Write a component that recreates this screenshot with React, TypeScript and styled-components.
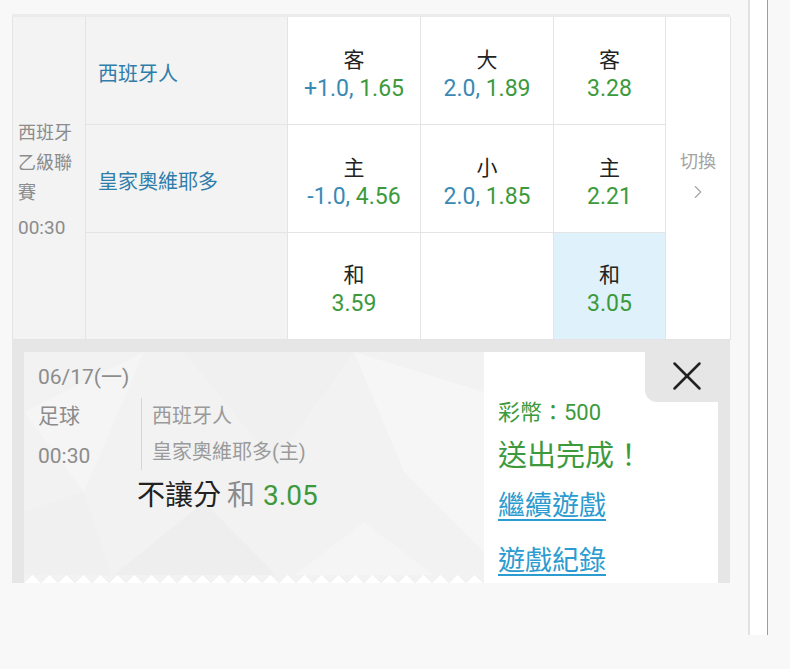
import React from 'react';
import styled, { createGlobalStyle } from 'styled-components';
import { ChevronRight, X } from 'lucide-react';

const GlobalStyle = createGlobalStyle`
  html, body {
    margin: 0;
    padding: 0;
    background: #f8f8f8;
  }
  body {
    font-family: Roboto, "Noto Sans CJK TC", "Noto Sans", sans-serif;
  }
  * { box-sizing: border-box; }
`;

const Page = styled.div`
  display: flex;
  height: 669px;
  overflow: hidden;
`;

const Main = styled.div`
  margin: 14px 0 0 12px;
  width: 718px;
  border-top: 3px solid #ebebeb;
`;

//----- odds board
const Board = styled.div`
  display: grid;
  grid-template-columns: 73px 202px 133px 133px 112px 65px;
  grid-template-rows: 108px 108px 107px;
  background: #fff;
  border-left: 1px solid #e4e4e4;
`;

const Cell = styled.div`
  border-right: 1px solid #e4e4e4;
  border-bottom: 1px solid #e4e4e4;
`;

const League = styled(Cell)`
  grid-row: span 3;
  background: #f3f3f3;
  padding: 4px 0 0 5px;
  display: flex;
  flex-direction: column;
  justify-content: center;
  color: #8c8c8c;
  font-size: 18px;
  line-height: 30px;
`;

const LeagueTime = styled.div`
  margin-top: 5px;
  font-size: 19px;
`;

const Team = styled(Cell)`
  background: #f3f3f3;
  display: flex;
  align-items: center;
  padding: 3px 0 0 12px;
  color: #2f7dab;
  font-size: 20px;
`;

const Odd = styled(Cell)<{ $picked?: boolean }>`
  background: ${(p) => (p.$picked ? '#dff1fb' : '#fff')};
  display: flex;
  flex-direction: column;
  align-items: center;
  justify-content: center;
  padding-top: 8px;
`;

const OddLabel = styled.div`
  color: #222;
  font-size: 21px;
  line-height: 28px;
`;

const OddValue = styled.div`
  font-size: 23px;
  line-height: 30px;
  white-space: nowrap;
`;

const Line = styled.span`
  color: #3a89b4;
`;

const Price = styled.span`
  color: #3c9a3c;
`;

const Switch = styled(Cell)`
  grid-row: span 3;
  background: #fff;
  display: flex;
  flex-direction: column;
  align-items: center;
  justify-content: center;
  gap: 6px;
  color: #a3a3a3;
  font-size: 18px;
  line-height: 26px;
  padding-bottom: 4px;
`;

//----- bet slip
const Slip = styled.div`
  background: #e6e6e6;
  padding: 12px 12px 0;
`;

const Ticket = styled.div`
  position: relative;
  display: flex;
  height: 231px;
  overflow: hidden;
`;

const Stub = styled.div`
  position: relative;
  width: 460px;
  background: #f2f2f2;
  padding: 11px 0 0 14px;
  overflow: hidden;

  &::after {
    content: '';
    position: absolute;
    left: 0;
    right: 0;
    bottom: 0;
    height: 8px;
    background:
      linear-gradient(to bottom right, #f2f2f2 50%, transparent 50%) 0 100% / 17px 16px,
      linear-gradient(to bottom left, #f2f2f2 50%, transparent 50%) 0 100% / 17px 16px,
      #fff;
  }
`;

const Pattern = styled.svg`
  position: absolute;
  inset: 0;
  pointer-events: none;
`;

const StubBody = styled.div`
  position: relative;
  color: #8c8c8c;
`;

const DateText = styled.div`
  font-size: 21px;
  line-height: 28px;
`;

const Info = styled.div`
  display: flex;
  margin-top: 5px;
`;

const Meta = styled.div`
  width: 103px;
  font-size: 21px;
  line-height: 40px;
`;

const Teams = styled.div`
  margin-top: 2px;
  height: 72px;
  border-left: 1px solid #d6d6d6;
  padding-left: 10px;
  color: #9a9a9a;
  font-size: 20px;
  line-height: 36px;
`;

const Pick = styled.div`
  margin: 3px 0 0 99px;
  font-size: 28px;
  line-height: 34px;
  color: #222;
`;

const PickSide = styled.span`
  color: #8c8c8c;
  margin: 0 8px 0 6px;
`;

const Receipt = styled.div`
  flex: 1;
  background: #fff;
  padding: 46px 0 0 14px;
  display: flex;
  flex-direction: column;
  align-items: flex-start;
`;

const Coins = styled.div`
  color: #3c9a3c;
  font-size: 22px;
  line-height: 30px;
`;

const Done = styled.div`
  margin-top: 4px;
  color: #3c9a3c;
  font-size: 29px;
  line-height: 48px;
`;

const Action = styled.a`
  display: block;
  margin-top: ${(p: { $gap: number }) => p.$gap}px;
  color: #2c9bd0;
  font-size: 27px;
  line-height: 50px;
  text-decoration: underline;
  text-underline-offset: 4px;
  cursor: pointer;
`;

const Close = styled.button`
  position: absolute;
  top: 0;
  right: 0;
  width: 73px;
  height: 50px;
  border: 0;
  padding: 0 0 2px 10px;
  background: #e6e6e6;
  border-bottom-left-radius: 12px;
  display: flex;
  align-items: center;
  justify-content: center;
  color: #222;
`;

//----- right scroll rail
const Rail = styled.div`
  margin-left: 18px;
  width: 20px;
  height: 635px;
  background: #fff;
  border-left: 2px solid #e2e2e2;
  border-right: 1px solid #9c9c9c;
`;

const odds = [
  [
    { label: '客', line: '+1.0, ', price: '1.65' },
    { label: '大', line: '2.0, ', price: '1.89' },
    { label: '客', price: '3.28' },
  ],
  [
    { label: '主', line: '-1.0, ', price: '4.56' },
    { label: '小', line: '2.0, ', price: '1.85' },
    { label: '主', price: '2.21' },
  ],
];

export default function App() {
  return (
    <>
      <GlobalStyle />
      <Page>
        <Main>
          <Board>
            <League>
              <div>西班牙</div>
              <div>乙級聯</div>
              <div>賽</div>
              <LeagueTime>00:30</LeagueTime>
            </League>
            <Team>西班牙人</Team>
            {odds[0].map((o, i) => (
              <Odd key={i}>
                <OddLabel>{o.label}</OddLabel>
                <OddValue>
                  {o.line && <Line>{o.line}</Line>}
                  <Price>{o.price}</Price>
                </OddValue>
              </Odd>
            ))}
            <Switch>
              <div>切換</div>
              <ChevronRight size={22} strokeWidth={1.2} />
            </Switch>
            <Team>皇家奧維耶多</Team>
            {odds[1].map((o, i) => (
              <Odd key={i}>
                <OddLabel>{o.label}</OddLabel>
                <OddValue>
                  {o.line && <Line>{o.line}</Line>}
                  <Price>{o.price}</Price>
                </OddValue>
              </Odd>
            ))}
            <Team />
            <Odd>
              <OddLabel>和</OddLabel>
              <OddValue>
                <Price>3.59</Price>
              </OddValue>
            </Odd>
            <Odd />
            <Odd $picked>
              <OddLabel>和</OddLabel>
              <OddValue>
                <Price>3.05</Price>
              </OddValue>
            </Odd>
          </Board>

          <Slip>
            <Ticket>
              <Stub>
                <Pattern width="460" height="231" viewBox="0 0 460 231">
                  <polygon points="0,60 120,0 60,140" fill="#f5f5f5" />
                  <polygon points="160,0 330,0 250,110" fill="#eeeeee" opacity="0.6" />
                  <polygon points="330,0 460,40 460,200 380,120" fill="#f6f6f6" />
                  <polygon points="80,231 180,150 260,231" fill="#ececec" opacity="0.7" />
                  <polygon points="260,231 340,170 420,231" fill="#f5f5f5" />
                  <polygon points="0,160 60,140 90,231 0,231" fill="#efefef" opacity="0.6" />
                </Pattern>
                <StubBody>
                  <DateText>06/17(一)</DateText>
                  <Info>
                    <Meta>
                      <div>足球</div>
                      <div>00:30</div>
                    </Meta>
                    <Teams>
                      <div>西班牙人</div>
                      <div>皇家奧維耶多(主)</div>
                    </Teams>
                  </Info>
                  <Pick>
                    不讓分<PickSide>和</PickSide>
                    <Price>3.05</Price>
                  </Pick>
                </StubBody>
              </Stub>
              <Receipt>
                <Coins>彩幣：500</Coins>
                <Done>送出完成！</Done>
                <Action $gap={1}>繼續遊戲</Action>
                <Action $gap={5}>遊戲紀錄</Action>
              </Receipt>
              <Close aria-label="close">
                <X size={50} strokeWidth={1.2} />
              </Close>
            </Ticket>
          </Slip>
        </Main>
        <Rail />
      </Page>
    </>
  );
}
